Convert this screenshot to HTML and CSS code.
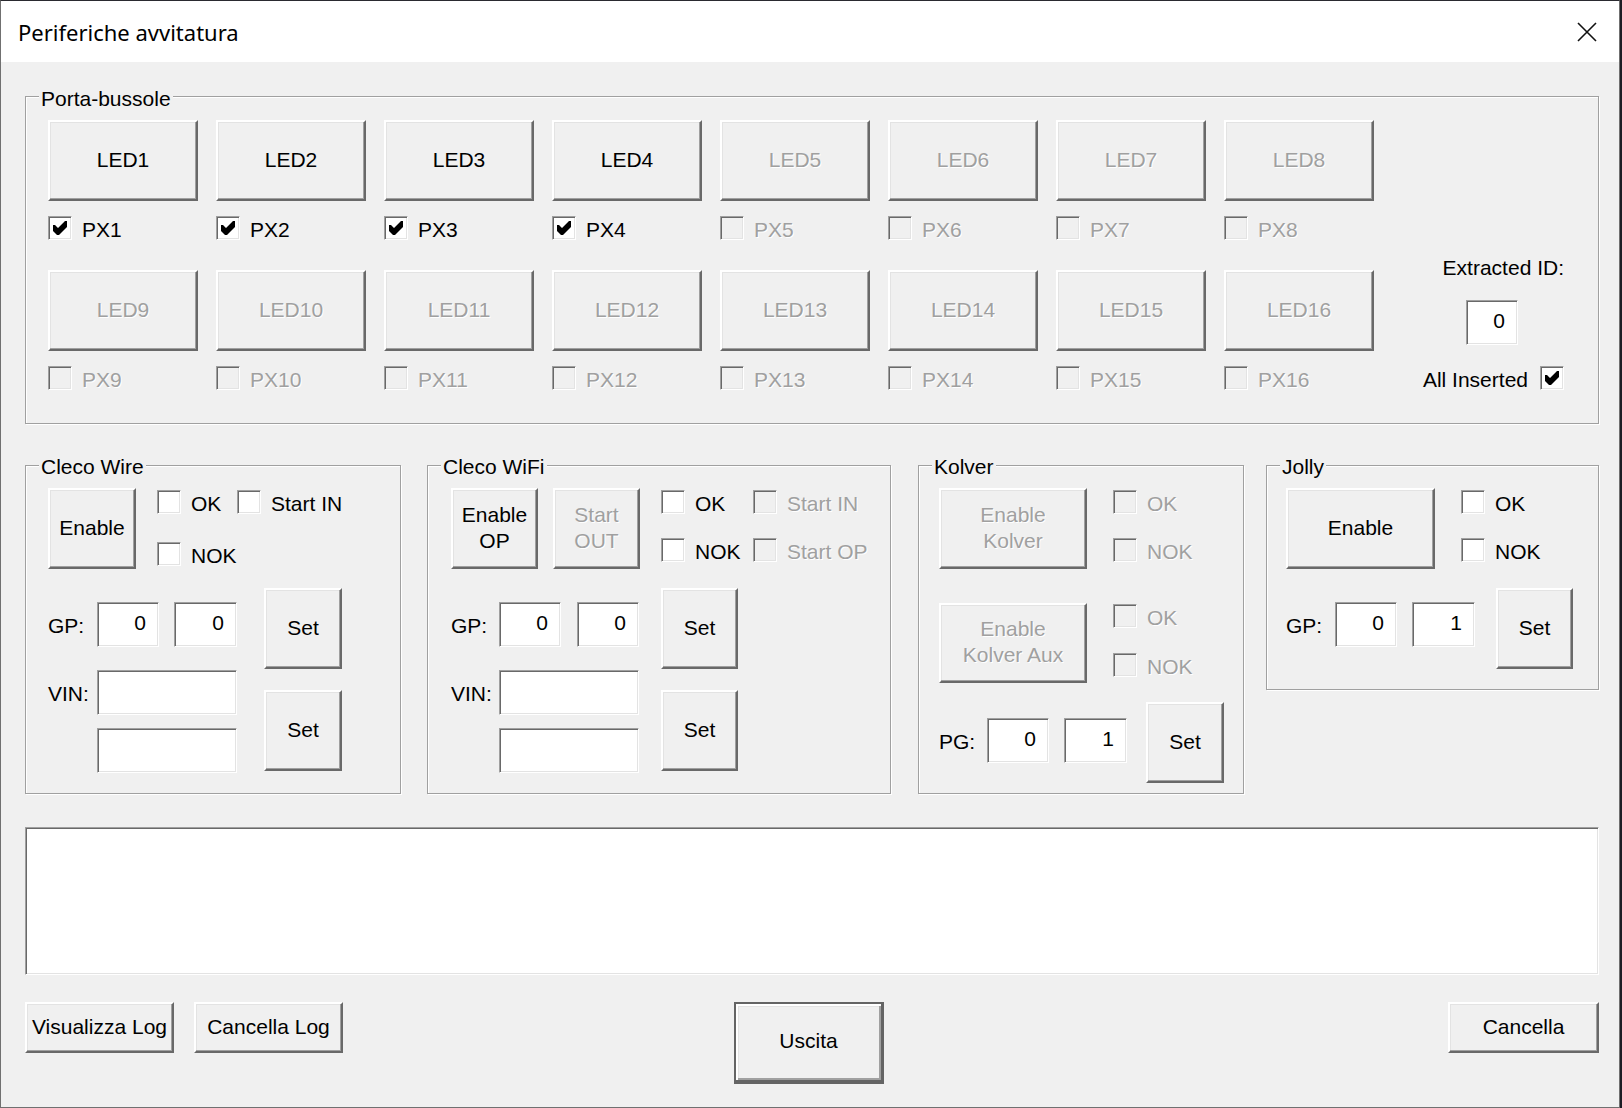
FILE: index.html
```html
<!DOCTYPE html>
<html lang="it">
<head>
<meta charset="utf-8">
<title>Periferiche avvitatura</title>
<link rel="stylesheet" href="styles.css">
</head>
<body>
<div class="window">
  <div class="titlebar">
    <span class="title">Periferiche avvitatura</span>
    <span class="close"><svg width="20" height="20" viewBox="0 0 20 20"><path d="M1 1L19 19M19 1L1 19" stroke="#111" stroke-width="1.6" fill="none"/></svg></span>
  </div>
  <div class="client">
    <div class="grp porta">
      <span class="legend">Porta-bussole</span>
      <div class="ledgrid">
        <div class="cell"><button class="btn led">LED1</button><label class="cb"><span class="box"><svg class="chk" width="14" height="14" viewBox="0 0 7 7"><polygon points="0,2 1,2 2.5,3.5 6,0 7,0 7,3 3,7 2,7 0,5"/></svg></span>PX1</label></div>
        <div class="cell"><button class="btn led">LED2</button><label class="cb"><span class="box"><svg class="chk" width="14" height="14" viewBox="0 0 7 7"><polygon points="0,2 1,2 2.5,3.5 6,0 7,0 7,3 3,7 2,7 0,5"/></svg></span>PX2</label></div>
        <div class="cell"><button class="btn led">LED3</button><label class="cb"><span class="box"><svg class="chk" width="14" height="14" viewBox="0 0 7 7"><polygon points="0,2 1,2 2.5,3.5 6,0 7,0 7,3 3,7 2,7 0,5"/></svg></span>PX3</label></div>
        <div class="cell"><button class="btn led">LED4</button><label class="cb"><span class="box"><svg class="chk" width="14" height="14" viewBox="0 0 7 7"><polygon points="0,2 1,2 2.5,3.5 6,0 7,0 7,3 3,7 2,7 0,5"/></svg></span>PX4</label></div>
        <div class="cell"><button class="btn led dis">LED5</button><label class="cb dis"><span class="box"></span>PX5</label></div>
        <div class="cell"><button class="btn led dis">LED6</button><label class="cb dis"><span class="box"></span>PX6</label></div>
        <div class="cell"><button class="btn led dis">LED7</button><label class="cb dis"><span class="box"></span>PX7</label></div>
        <div class="cell"><button class="btn led dis">LED8</button><label class="cb dis"><span class="box"></span>PX8</label></div>
        <div class="cell"><button class="btn led dis">LED9</button><label class="cb dis"><span class="box"></span>PX9</label></div>
        <div class="cell"><button class="btn led dis">LED10</button><label class="cb dis"><span class="box"></span>PX10</label></div>
        <div class="cell"><button class="btn led dis">LED11</button><label class="cb dis"><span class="box"></span>PX11</label></div>
        <div class="cell"><button class="btn led dis">LED12</button><label class="cb dis"><span class="box"></span>PX12</label></div>
        <div class="cell"><button class="btn led dis">LED13</button><label class="cb dis"><span class="box"></span>PX13</label></div>
        <div class="cell"><button class="btn led dis">LED14</button><label class="cb dis"><span class="box"></span>PX14</label></div>
        <div class="cell"><button class="btn led dis">LED15</button><label class="cb dis"><span class="box"></span>PX15</label></div>
        <div class="cell"><button class="btn led dis">LED16</button><label class="cb dis"><span class="box"></span>PX16</label></div>
      </div>
      <div class="extract">
        <div class="ext-label">Extracted ID:</div>
        <input class="field ext-id" type="text" value="0">
        <label class="cb all"><span>All Inserted</span><span class="box"><svg class="chk" width="14" height="14" viewBox="0 0 7 7"><polygon points="0,2 1,2 2.5,3.5 6,0 7,0 7,3 3,7 2,7 0,5"/></svg></span></label>
      </div>
    </div>

    <div class="groups">
      <div class="grp wire">
        <span class="legend">Cleco Wire</span>
        <div class="row">
          <button class="btn b-enable">Enable</button>
          <div class="cbgrid">
            <label class="cb"><span class="box"></span>OK</label>
            <label class="cb"><span class="box"></span>Start IN</label>
            <label class="cb"><span class="box"></span>NOK</label>
          </div>
        </div>
        <div class="row gp">
          <span class="lbl">GP:</span>
          <input class="field num" type="text" value="0">
          <input class="field num" type="text" value="0">
          <button class="btn set">Set</button>
        </div>
        <div class="row vin">
          <span class="lbl">VIN:</span>
          <div class="vins">
            <input class="field" type="text" value="">
            <input class="field" type="text" value="">
          </div>
          <button class="btn set">Set</button>
        </div>
      </div>

      <div class="grp wifi">
        <span class="legend">Cleco WiFi</span>
        <div class="row">
          <button class="btn b-enable">Enable<br>OP</button>
          <button class="btn b-start dis">Start<br>OUT</button>
          <div class="cbgrid">
            <label class="cb"><span class="box"></span>OK</label>
            <label class="cb dis"><span class="box"></span>Start IN</label>
            <label class="cb"><span class="box"></span>NOK</label>
            <label class="cb dis"><span class="box"></span>Start OP</label>
          </div>
        </div>
        <div class="row gp">
          <span class="lbl">GP:</span>
          <input class="field num" type="text" value="0">
          <input class="field num" type="text" value="0">
          <button class="btn set">Set</button>
        </div>
        <div class="row vin">
          <span class="lbl">VIN:</span>
          <div class="vins">
            <input class="field" type="text" value="">
            <input class="field" type="text" value="">
          </div>
          <button class="btn set">Set</button>
        </div>
      </div>

      <div class="grp kolver">
        <span class="legend">Kolver</span>
        <div class="row">
          <button class="btn b-enable dis">Enable<br>Kolver</button>
          <div class="cbgrid">
            <label class="cb dis"><span class="box"></span>OK</label>
            <label class="cb dis"><span class="box"></span>NOK</label>
          </div>
        </div>
        <div class="row aux">
          <button class="btn b-aux dis">Enable<br>Kolver Aux</button>
          <div class="cbgrid">
            <label class="cb dis"><span class="box"></span>OK</label>
            <label class="cb dis"><span class="box"></span>NOK</label>
          </div>
        </div>
        <div class="row gp">
          <span class="lbl">PG:</span>
          <input class="field num" type="text" value="0">
          <input class="field num" type="text" value="1">
          <button class="btn set">Set</button>
        </div>
      </div>

      <div class="grp jolly">
        <span class="legend">Jolly</span>
        <div class="row">
          <button class="btn b-enable">Enable</button>
          <div class="cbgrid">
            <label class="cb"><span class="box"></span>OK</label>
            <label class="cb"><span class="box"></span>NOK</label>
          </div>
        </div>
        <div class="row gp">
          <span class="lbl">GP:</span>
          <input class="field num" type="text" value="0">
          <input class="field num" type="text" value="1">
          <button class="btn set">Set</button>
        </div>
      </div>
    </div>

    <div class="log"></div>

    <div class="actions">
      <button class="btn small">Visualizza Log</button>
      <button class="btn small b-clear">Cancella Log</button>
      <button class="btn default">Uscita</button>
      <button class="btn small b-cancel">Cancella</button>
    </div>
  </div>
</div>
</body>
</html>
```

FILE: styles.css
```css
* { box-sizing: border-box; }
html, body { margin: 0; padding: 0; }
body {
  width: 1622px;
  height: 1108px;
  overflow: hidden;
  background: #1c1c24;
  font-family: "Liberation Sans", Arial, sans-serif;
  font-size: 21px;
  color: #000;
}
.window {
  width: 1620px;
  height: 1108px;
  border: 1px solid #707070;
  border-top-color: #2a2a30;
  background: #f0f0f0;
  display: flex;
  flex-direction: column;
}
.titlebar {
  flex: none;
  height: 61px;
  background: #fff;
  display: flex;
  align-items: center;
  justify-content: space-between;
  padding: 0 22px 0 17px;
}
.title {
  font-family: "Noto Sans", "Segoe UI", sans-serif;
  font-size: 22px;
  color: #000;
}
.close svg { display: block; }
.client {
  flex: 1;
  padding: 34px 0 0 24px;
}

/* group boxes */
.grp {
  position: relative;
  border: 1px solid #a0a0a0;
  box-shadow: inset 1px 1px #fff, 1px 1px #fff;
}
.legend {
  position: absolute;
  top: -11px;
  left: 13px;
  padding: 0 2px;
  background: #f0f0f0;
  line-height: 24px;
  white-space: nowrap;
}
.porta > .legend { top: -10px; }

/* buttons */
.btn {
  font: inherit;
  color: #000;
  background: #f0f0f0;
  border: 2px solid;
  border-color: #fff #696969 #696969 #fff;
  box-shadow: inset -1px -1px #a0a0a0, inset 1px 1px #e3e3e3;
  padding: 0 0 2px;
  line-height: 26px;
  flex: none;
  text-align: center;
}
.dis, .btn.dis { color: #a0a0a0; text-shadow: 1px 1px #fff; }

/* fields */
.field {
  font: inherit;
  color: #000;
  background: #fff;
  border: 1px solid;
  border-color: #a0a0a0 #fff #fff #a0a0a0;
  box-shadow: inset 1px 1px #696969, inset -1px -1px #e3e3e3;
  padding: 0 12px 4px 4px;
  text-align: right;
  outline: none;
  flex: none;
}

/* checkboxes */
.cb {
  display: flex;
  align-items: flex-start;
  height: 24px;
  line-height: 28px;
  white-space: nowrap;
}
.box {
  flex: none;
  width: 24px;
  height: 24px;
  margin-right: 10px;
  border: 1px solid;
  border-color: #a0a0a0 #fff #fff #a0a0a0;
  box-shadow: inset 1px 1px #696969, inset -1px -1px #e3e3e3;
  background: #fff;
  display: flex;
  align-items: center;
  justify-content: center;
}
.cb.dis .box { background: #f0f0f0; }
.chk { display: block; fill: #000; }

/* porta-bussole */
.porta {
  width: 1574px;
  display: flex;
  padding: 23px 34px 33px 22px;
}
.ledgrid {
  display: grid;
  grid-template-columns: repeat(8, 150px);
  column-gap: 18px;
  row-gap: 30px;
}
.cell {
  display: flex;
  flex-direction: column;
  align-items: flex-start;
}
.led { width: 150px; height: 81px; }
.cell .cb { margin-top: 15px; }
.extract {
  flex: 1;
  display: flex;
  flex-direction: column;
  align-items: flex-end;
}
.ext-label { margin-top: 136px; line-height: 24px; }
.ext-id { width: 52px; height: 45px; margin-top: 20px; margin-right: 46px; }
.all { margin-top: 21px; }
.all .box { margin-right: 0; margin-left: 12px; }

/* lower groups */
.groups {
  display: flex;
  align-items: flex-start;
  margin-top: 41px;
}
.row { display: flex; align-items: flex-start; }
.cbgrid {
  display: grid;
  grid-template-columns: var(--c1, auto) auto;
  row-gap: var(--rg, 24px);
  margin-top: 2px;
  margin-left: var(--cbml, 21px);
}
.b-enable { width: var(--ew, 88px); height: 81px; }
.b-start { width: 87px; height: 81px; margin-left: 15px; }
.gp { margin-top: 19px; }
.lbl { width: var(--lblw, 49px); line-height: 45px; padding-top: 1px; flex: none; }
.gp .lbl { margin-top: var(--nmt, 14px); }
.num { width: 62px; height: 45px; margin-top: var(--nmt, 14px); }
.num + .num { margin-left: var(--ngap, 15px); width: var(--n2w, 63px); }
.set { width: var(--setw, 78px); height: 81px; margin-left: var(--sgap, 27px); }
.vin { margin-top: 1px; }
.vins { display: flex; flex-direction: column; gap: 13px; }
.vins .field { width: 140px; height: 45px; }
.vin .set { margin-top: 20px; }

.wire {
  width: 376px; height: 329px;
  padding: 22px 0 0 22px;
  --c1: 80px; --rg: 28px; --cbml: 21px; --ew: 88px;
}
.wifi {
  width: 464px; height: 329px;
  margin-left: 26px;
  padding: 22px 0 0 23px;
  --c1: 92px; --rg: 24px; --cbml: 21px; --ew: 87px;
  --lblw: 48px; --ngap: 16px; --n2w: 62px; --sgap: 22px; --setw: 77px;
}
.kolver {
  width: 326px; height: 329px;
  margin-left: 27px;
  padding: 22px 0 0 20px;
  --c1: auto; --rg: 24px; --cbml: 26px; --ew: 148px;
  --lblw: 48px; --ngap: 15px; --n2w: 63px; --sgap: 19px; --setw: 78px; --nmt: 16px;
}
.kolver .cbgrid { grid-template-columns: auto; }
.aux { margin-top: 34px; }
.b-aux { width: 148px; height: 80px; }
.aux .cbgrid { margin-top: 1px; row-gap: 25px; }
.jolly {
  width: 333px; height: 225px;
  margin-left: 22px;
  padding: 22px 0 0 19px;
  --rg: 24px; --cbml: 26px; --ew: 149px;
  --lblw: 49px; --ngap: 15px; --n2w: 63px; --sgap: 21px; --setw: 77px;
}
.jolly .cbgrid { grid-template-columns: auto; }

/* log and actions */
.log {
  width: 1574px;
  height: 148px;
  margin-top: 33px;
  background: #fff;
  border: 1px solid;
  border-color: #a0a0a0 #fff #fff #a0a0a0;
  box-shadow: inset 1px 1px #696969, inset -1px -1px #e3e3e3;
}
.actions {
  width: 1574px;
  display: flex;
  align-items: flex-start;
  margin-top: 27px;
}
.small { width: 149px; height: 51px; }
.b-clear { margin-left: 20px; }
.default {
  width: 150px;
  height: 82px;
  margin-left: 391px;
  border: 2px solid #646464;
  border-right-width: 3px;
  border-bottom-width: 4px;
  box-shadow: inset 2px 2px #fff, inset -2px -2px #a0a0a0, inset 3px 3px #e3e3e3;
}
.b-cancel { margin-left: auto; width: 151px; }
```
